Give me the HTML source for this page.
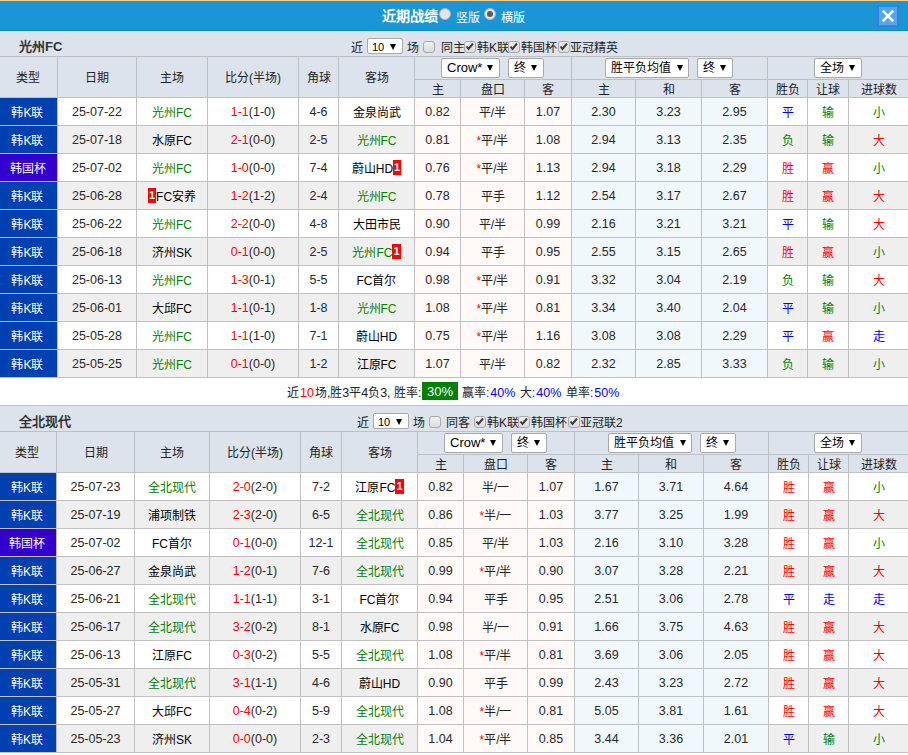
<!DOCTYPE html><html lang="zh-CN"><head><meta charset="utf-8"><style>
*{margin:0;padding:0;box-sizing:border-box}
html,body{width:908px;height:755px;overflow:hidden;background:#fff;font-family:"Liberation Sans",sans-serif;font-size:12px;color:#222}
.b{position:absolute}
.c{display:flex;align-items:center;justify-content:center;white-space:nowrap;line-height:14px;padding-top:2px}
.hd{color:#222}
.ty{color:#fff;padding-right:2px}
.num{color:#282828;font-size:12.5px;padding-top:1px}
.tm{color:#000}
.bd{background:#f00;color:#fff;font-weight:bold;font-size:11px;line-height:15px;padding:0 1px;position:relative;top:-1px}
.star{color:#f00}
.res{}
.sel{position:absolute;background:#fff;border:1px solid #a9a9a9;border-radius:2px}
.st{position:absolute;left:5px;top:2px;line-height:14px;color:#000}
.arr{position:absolute;top:6px;width:0;height:0;border-left:3.5px solid transparent;border-right:3.5px solid transparent;border-top:6px solid #000}
.cb{position:absolute;width:12px;height:12px;border:1px solid #a8a8a8;border-radius:3px;background:linear-gradient(#f0f0f0,#dcdcdc)}
.t{position:absolute;white-space:nowrap;line-height:14px;padding-top:1px}
</style></head><body>
<div class="b" style="left:0;top:0;width:908px;height:1px;background:#f5d08a"></div>
<div class="b" style="left:0;top:1px;width:908px;height:30px;background:#1a96d6;border-bottom:1px solid #0e8ad0"></div>
<div class="t" style="left:382px;top:7px;color:#fff;font-weight:bold;font-size:14px;line-height:16px">近期战绩</div>
<div class="b" style="left:439px;top:8px;width:12px;height:12px;border-radius:50%;background:#e6e6e6;border:1px solid #b0b0b0"></div>
<div class="t" style="left:456px;top:10px;color:#fff;font-size:12px">竖版</div>
<div class="b" style="left:484px;top:8px;width:12px;height:12px;border-radius:50%;background:#e6e6e6;border:1px solid #b0b0b0"><div class="b" style="left:2px;top:2px;width:6px;height:6px;border-radius:50%;background:#5c5c5c"></div></div>
<div class="t" style="left:501px;top:10px;color:#fff;font-size:12px">横版</div>
<div class="b" style="left:877px;top:5px;width:22px;height:22px;background:#56a5e8;border:2px solid #2a85e0"><svg width="18" height="18" style="position:absolute;left:0;top:0"><path d="M4.6 4.6L13.4 13.4M13.4 4.6L4.6 13.4" stroke="#fff" stroke-width="2.6" stroke-linecap="square"/></svg></div>
<div class="b" style="left:0;top:31px;width:908px;height:25px;background:#dce3ec"></div>
<div class="t" style="left:19px;top:39px;font-weight:bold;font-size:13px;color:#333">光州FC</div>
<div class="t" style="left:351px;top:40px">近</div>
<div class="sel" style="left:367px;top:38px;width:36px;height:16px;"><span class="st" style="top:2px"><span style="font-size:11px;position:relative;left:-1px;top:-1px">10</span></span><span class="arr" style="left:22px;top:5px"></span></div>
<div class="t" style="left:407px;top:40px">场</div>
<div class="cb" style="left:423px;top:41px"></div>
<div class="t" style="left:441px;top:40px">同主</div>
<div class="cb" style="left:464px;top:41px"><svg width="11" height="11" style="position:absolute;left:-1px;top:-1px"><path d="M2.5 5.5L4.5 8L9 2.5" stroke="#3c3c3c" stroke-width="2" fill="none"/></svg></div>
<div class="t" style="left:477px;top:40px">韩K联</div>
<div class="cb" style="left:508px;top:41px"><svg width="11" height="11" style="position:absolute;left:-1px;top:-1px"><path d="M2.5 5.5L4.5 8L9 2.5" stroke="#3c3c3c" stroke-width="2" fill="none"/></svg></div>
<div class="t" style="left:521px;top:40px">韩国杯</div>
<div class="cb" style="left:558px;top:41px"><svg width="11" height="11" style="position:absolute;left:-1px;top:-1px"><path d="M2.5 5.5L4.5 8L9 2.5" stroke="#3c3c3c" stroke-width="2" fill="none"/></svg></div>
<div class="t" style="left:570px;top:40px">亚冠精英</div>
<div class="b" style="left:0px;top:56px;width:908px;height:322px;background:#c0c0c0;"></div>
<div class="b c hd" style="left:0px;top:57px;width:57px;height:40px;background:#dce3ec;padding-right:2px">类型</div>
<div class="b c hd" style="left:58px;top:57px;width:78px;height:40px;background:#dce3ec;">日期</div>
<div class="b c hd" style="left:137px;top:57px;width:70px;height:40px;background:#dce3ec;">主场</div>
<div class="b c hd" style="left:208px;top:57px;width:90px;height:40px;background:#dce3ec;">比分(半场)</div>
<div class="b c hd" style="left:299px;top:57px;width:39px;height:40px;background:#dce3ec;">角球</div>
<div class="b c hd" style="left:339px;top:57px;width:75px;height:40px;background:#dce3ec;">客场</div>
<div class="b c" style="left:415px;top:57px;width:156px;height:22px;background:#dce3ec;"></div>
<div class="b c" style="left:572px;top:57px;width:195px;height:22px;background:#dce3ec;"></div>
<div class="b c" style="left:768px;top:57px;width:140px;height:22px;background:#dce3ec;"></div>
<div class="b c hd" style="left:415px;top:80px;width:45px;height:17px;background:#dce3ec;">主</div>
<div class="b c hd" style="left:461px;top:80px;width:63px;height:17px;background:#dce3ec;">盘口</div>
<div class="b c hd" style="left:525px;top:80px;width:46px;height:17px;background:#dce3ec;">客</div>
<div class="b c hd" style="left:572px;top:80px;width:63px;height:17px;background:#dce3ec;">主</div>
<div class="b c hd" style="left:636px;top:80px;width:65px;height:17px;background:#dce3ec;">和</div>
<div class="b c hd" style="left:702px;top:80px;width:65px;height:17px;background:#dce3ec;">客</div>
<div class="b c hd" style="left:768px;top:80px;width:39px;height:17px;background:#dce3ec;">胜负</div>
<div class="b c hd" style="left:808px;top:80px;width:40px;height:17px;background:#dce3ec;">让球</div>
<div class="b c hd" style="left:849px;top:80px;width:59px;height:17px;background:#dce3ec;">进球数</div>
<div class="b c ty" style="left:0px;top:98px;width:57px;height:27px;background:#0040b0;">韩K联</div>
<div class="b c num" style="left:58px;top:98px;width:78px;height:27px;background:#fff;">25-07-22</div>
<div class="b c tm" style="left:137px;top:98px;width:70px;height:27px;background:#fff;"><span style="color:#008000">光州FC</span></div>
<div class="b c num sc" style="left:208px;top:98px;width:90px;height:27px;background:#fff;"><span style="color:#f00">1-1</span>(1-0)</div>
<div class="b c num" style="left:299px;top:98px;width:39px;height:27px;background:#fff;">4-6</div>
<div class="b c tm" style="left:339px;top:98px;width:75px;height:27px;background:#fff;"><span style="color:#000">金泉尚武</span></div>
<div class="b c num" style="left:415px;top:98px;width:45px;height:27px;background:#fffaf7;">0.82</div>
<div class="b c hc" style="left:461px;top:98px;width:63px;height:27px;background:#fffaf7;">平/半</div>
<div class="b c num" style="left:525px;top:98px;width:46px;height:27px;background:#fffaf7;">1.07</div>
<div class="b c num" style="left:572px;top:98px;width:63px;height:27px;background:#f1f8fc;">2.30</div>
<div class="b c num" style="left:636px;top:98px;width:65px;height:27px;background:#f1f8fc;">3.23</div>
<div class="b c num" style="left:702px;top:98px;width:65px;height:27px;background:#f1f8fc;">2.95</div>
<div class="b c res" style="left:768px;top:98px;width:39px;height:27px;background:#fff;"><span style="color:#0000ff">平</span></div>
<div class="b c res" style="left:808px;top:98px;width:40px;height:27px;background:#fff;"><span style="color:#008000">输</span></div>
<div class="b c res" style="left:849px;top:98px;width:59px;height:27px;background:#fff;"><span style="color:#008000">小</span></div>
<div class="b c ty" style="left:0px;top:126px;width:57px;height:27px;background:#0040b0;">韩K联</div>
<div class="b c num" style="left:58px;top:126px;width:78px;height:27px;background:#efefef;">25-07-18</div>
<div class="b c tm" style="left:137px;top:126px;width:70px;height:27px;background:#efefef;"><span style="color:#000">水原FC</span></div>
<div class="b c num sc" style="left:208px;top:126px;width:90px;height:27px;background:#efefef;"><span style="color:#f00">2-1</span>(0-0)</div>
<div class="b c num" style="left:299px;top:126px;width:39px;height:27px;background:#efefef;">2-5</div>
<div class="b c tm" style="left:339px;top:126px;width:75px;height:27px;background:#efefef;"><span style="color:#008000">光州FC</span></div>
<div class="b c num" style="left:415px;top:126px;width:45px;height:27px;background:#fffaf7;">0.81</div>
<div class="b c hc" style="left:461px;top:126px;width:63px;height:27px;background:#fffaf7;"><span class="star">*</span>平/半</div>
<div class="b c num" style="left:525px;top:126px;width:46px;height:27px;background:#fffaf7;">1.08</div>
<div class="b c num" style="left:572px;top:126px;width:63px;height:27px;background:#f1f8fc;">2.94</div>
<div class="b c num" style="left:636px;top:126px;width:65px;height:27px;background:#f1f8fc;">3.13</div>
<div class="b c num" style="left:702px;top:126px;width:65px;height:27px;background:#f1f8fc;">2.35</div>
<div class="b c res" style="left:768px;top:126px;width:39px;height:27px;background:#efefef;"><span style="color:#008000">负</span></div>
<div class="b c res" style="left:808px;top:126px;width:40px;height:27px;background:#efefef;"><span style="color:#008000">输</span></div>
<div class="b c res" style="left:849px;top:126px;width:59px;height:27px;background:#efefef;"><span style="color:#ff0000">大</span></div>
<div class="b c ty" style="left:0px;top:154px;width:57px;height:27px;background:#3300cc;">韩国杯</div>
<div class="b c num" style="left:58px;top:154px;width:78px;height:27px;background:#fff;">25-07-02</div>
<div class="b c tm" style="left:137px;top:154px;width:70px;height:27px;background:#fff;"><span style="color:#008000">光州FC</span></div>
<div class="b c num sc" style="left:208px;top:154px;width:90px;height:27px;background:#fff;"><span style="color:#f00">1-0</span>(0-0)</div>
<div class="b c num" style="left:299px;top:154px;width:39px;height:27px;background:#fff;">7-4</div>
<div class="b c tm" style="left:339px;top:154px;width:75px;height:27px;background:#fff;"><span style="color:#000">蔚山HD</span><span class="bd">1</span></div>
<div class="b c num" style="left:415px;top:154px;width:45px;height:27px;background:#fffaf7;">0.76</div>
<div class="b c hc" style="left:461px;top:154px;width:63px;height:27px;background:#fffaf7;"><span class="star">*</span>平/半</div>
<div class="b c num" style="left:525px;top:154px;width:46px;height:27px;background:#fffaf7;">1.13</div>
<div class="b c num" style="left:572px;top:154px;width:63px;height:27px;background:#f1f8fc;">2.94</div>
<div class="b c num" style="left:636px;top:154px;width:65px;height:27px;background:#f1f8fc;">3.18</div>
<div class="b c num" style="left:702px;top:154px;width:65px;height:27px;background:#f1f8fc;">2.29</div>
<div class="b c res" style="left:768px;top:154px;width:39px;height:27px;background:#fff;"><span style="color:#ff0000">胜</span></div>
<div class="b c res" style="left:808px;top:154px;width:40px;height:27px;background:#fff;"><span style="color:#ff0000">赢</span></div>
<div class="b c res" style="left:849px;top:154px;width:59px;height:27px;background:#fff;"><span style="color:#008000">小</span></div>
<div class="b c ty" style="left:0px;top:182px;width:57px;height:27px;background:#0040b0;">韩K联</div>
<div class="b c num" style="left:58px;top:182px;width:78px;height:27px;background:#efefef;">25-06-28</div>
<div class="b c tm" style="left:137px;top:182px;width:70px;height:27px;background:#efefef;"><span class="bd">1</span><span style="color:#000">FC安养</span></div>
<div class="b c num sc" style="left:208px;top:182px;width:90px;height:27px;background:#efefef;"><span style="color:#f00">1-2</span>(1-2)</div>
<div class="b c num" style="left:299px;top:182px;width:39px;height:27px;background:#efefef;">2-4</div>
<div class="b c tm" style="left:339px;top:182px;width:75px;height:27px;background:#efefef;"><span style="color:#008000">光州FC</span></div>
<div class="b c num" style="left:415px;top:182px;width:45px;height:27px;background:#fffaf7;">0.78</div>
<div class="b c hc" style="left:461px;top:182px;width:63px;height:27px;background:#fffaf7;">平手</div>
<div class="b c num" style="left:525px;top:182px;width:46px;height:27px;background:#fffaf7;">1.12</div>
<div class="b c num" style="left:572px;top:182px;width:63px;height:27px;background:#f1f8fc;">2.54</div>
<div class="b c num" style="left:636px;top:182px;width:65px;height:27px;background:#f1f8fc;">3.17</div>
<div class="b c num" style="left:702px;top:182px;width:65px;height:27px;background:#f1f8fc;">2.67</div>
<div class="b c res" style="left:768px;top:182px;width:39px;height:27px;background:#efefef;"><span style="color:#ff0000">胜</span></div>
<div class="b c res" style="left:808px;top:182px;width:40px;height:27px;background:#efefef;"><span style="color:#ff0000">赢</span></div>
<div class="b c res" style="left:849px;top:182px;width:59px;height:27px;background:#efefef;"><span style="color:#ff0000">大</span></div>
<div class="b c ty" style="left:0px;top:210px;width:57px;height:27px;background:#0040b0;">韩K联</div>
<div class="b c num" style="left:58px;top:210px;width:78px;height:27px;background:#fff;">25-06-22</div>
<div class="b c tm" style="left:137px;top:210px;width:70px;height:27px;background:#fff;"><span style="color:#008000">光州FC</span></div>
<div class="b c num sc" style="left:208px;top:210px;width:90px;height:27px;background:#fff;"><span style="color:#f00">2-2</span>(0-0)</div>
<div class="b c num" style="left:299px;top:210px;width:39px;height:27px;background:#fff;">4-8</div>
<div class="b c tm" style="left:339px;top:210px;width:75px;height:27px;background:#fff;"><span style="color:#000">大田市民</span></div>
<div class="b c num" style="left:415px;top:210px;width:45px;height:27px;background:#fffaf7;">0.90</div>
<div class="b c hc" style="left:461px;top:210px;width:63px;height:27px;background:#fffaf7;">平/半</div>
<div class="b c num" style="left:525px;top:210px;width:46px;height:27px;background:#fffaf7;">0.99</div>
<div class="b c num" style="left:572px;top:210px;width:63px;height:27px;background:#f1f8fc;">2.16</div>
<div class="b c num" style="left:636px;top:210px;width:65px;height:27px;background:#f1f8fc;">3.21</div>
<div class="b c num" style="left:702px;top:210px;width:65px;height:27px;background:#f1f8fc;">3.21</div>
<div class="b c res" style="left:768px;top:210px;width:39px;height:27px;background:#fff;"><span style="color:#0000ff">平</span></div>
<div class="b c res" style="left:808px;top:210px;width:40px;height:27px;background:#fff;"><span style="color:#008000">输</span></div>
<div class="b c res" style="left:849px;top:210px;width:59px;height:27px;background:#fff;"><span style="color:#ff0000">大</span></div>
<div class="b c ty" style="left:0px;top:238px;width:57px;height:27px;background:#0040b0;">韩K联</div>
<div class="b c num" style="left:58px;top:238px;width:78px;height:27px;background:#efefef;">25-06-18</div>
<div class="b c tm" style="left:137px;top:238px;width:70px;height:27px;background:#efefef;"><span style="color:#000">济州SK</span></div>
<div class="b c num sc" style="left:208px;top:238px;width:90px;height:27px;background:#efefef;"><span style="color:#f00">0-1</span>(0-0)</div>
<div class="b c num" style="left:299px;top:238px;width:39px;height:27px;background:#efefef;">2-5</div>
<div class="b c tm" style="left:339px;top:238px;width:75px;height:27px;background:#efefef;"><span style="color:#008000">光州FC</span><span class="bd">1</span></div>
<div class="b c num" style="left:415px;top:238px;width:45px;height:27px;background:#fffaf7;">0.94</div>
<div class="b c hc" style="left:461px;top:238px;width:63px;height:27px;background:#fffaf7;">平手</div>
<div class="b c num" style="left:525px;top:238px;width:46px;height:27px;background:#fffaf7;">0.95</div>
<div class="b c num" style="left:572px;top:238px;width:63px;height:27px;background:#f1f8fc;">2.55</div>
<div class="b c num" style="left:636px;top:238px;width:65px;height:27px;background:#f1f8fc;">3.15</div>
<div class="b c num" style="left:702px;top:238px;width:65px;height:27px;background:#f1f8fc;">2.65</div>
<div class="b c res" style="left:768px;top:238px;width:39px;height:27px;background:#efefef;"><span style="color:#ff0000">胜</span></div>
<div class="b c res" style="left:808px;top:238px;width:40px;height:27px;background:#efefef;"><span style="color:#ff0000">赢</span></div>
<div class="b c res" style="left:849px;top:238px;width:59px;height:27px;background:#efefef;"><span style="color:#008000">小</span></div>
<div class="b c ty" style="left:0px;top:266px;width:57px;height:27px;background:#0040b0;">韩K联</div>
<div class="b c num" style="left:58px;top:266px;width:78px;height:27px;background:#fff;">25-06-13</div>
<div class="b c tm" style="left:137px;top:266px;width:70px;height:27px;background:#fff;"><span style="color:#008000">光州FC</span></div>
<div class="b c num sc" style="left:208px;top:266px;width:90px;height:27px;background:#fff;"><span style="color:#f00">1-3</span>(0-1)</div>
<div class="b c num" style="left:299px;top:266px;width:39px;height:27px;background:#fff;">5-5</div>
<div class="b c tm" style="left:339px;top:266px;width:75px;height:27px;background:#fff;"><span style="color:#000">FC首尔</span></div>
<div class="b c num" style="left:415px;top:266px;width:45px;height:27px;background:#fffaf7;">0.98</div>
<div class="b c hc" style="left:461px;top:266px;width:63px;height:27px;background:#fffaf7;"><span class="star">*</span>平/半</div>
<div class="b c num" style="left:525px;top:266px;width:46px;height:27px;background:#fffaf7;">0.91</div>
<div class="b c num" style="left:572px;top:266px;width:63px;height:27px;background:#f1f8fc;">3.32</div>
<div class="b c num" style="left:636px;top:266px;width:65px;height:27px;background:#f1f8fc;">3.04</div>
<div class="b c num" style="left:702px;top:266px;width:65px;height:27px;background:#f1f8fc;">2.19</div>
<div class="b c res" style="left:768px;top:266px;width:39px;height:27px;background:#fff;"><span style="color:#008000">负</span></div>
<div class="b c res" style="left:808px;top:266px;width:40px;height:27px;background:#fff;"><span style="color:#008000">输</span></div>
<div class="b c res" style="left:849px;top:266px;width:59px;height:27px;background:#fff;"><span style="color:#ff0000">大</span></div>
<div class="b c ty" style="left:0px;top:294px;width:57px;height:27px;background:#0040b0;">韩K联</div>
<div class="b c num" style="left:58px;top:294px;width:78px;height:27px;background:#efefef;">25-06-01</div>
<div class="b c tm" style="left:137px;top:294px;width:70px;height:27px;background:#efefef;"><span style="color:#000">大邱FC</span></div>
<div class="b c num sc" style="left:208px;top:294px;width:90px;height:27px;background:#efefef;"><span style="color:#f00">1-1</span>(0-1)</div>
<div class="b c num" style="left:299px;top:294px;width:39px;height:27px;background:#efefef;">1-8</div>
<div class="b c tm" style="left:339px;top:294px;width:75px;height:27px;background:#efefef;"><span style="color:#008000">光州FC</span></div>
<div class="b c num" style="left:415px;top:294px;width:45px;height:27px;background:#fffaf7;">1.08</div>
<div class="b c hc" style="left:461px;top:294px;width:63px;height:27px;background:#fffaf7;"><span class="star">*</span>平/半</div>
<div class="b c num" style="left:525px;top:294px;width:46px;height:27px;background:#fffaf7;">0.81</div>
<div class="b c num" style="left:572px;top:294px;width:63px;height:27px;background:#f1f8fc;">3.34</div>
<div class="b c num" style="left:636px;top:294px;width:65px;height:27px;background:#f1f8fc;">3.40</div>
<div class="b c num" style="left:702px;top:294px;width:65px;height:27px;background:#f1f8fc;">2.04</div>
<div class="b c res" style="left:768px;top:294px;width:39px;height:27px;background:#efefef;"><span style="color:#0000ff">平</span></div>
<div class="b c res" style="left:808px;top:294px;width:40px;height:27px;background:#efefef;"><span style="color:#008000">输</span></div>
<div class="b c res" style="left:849px;top:294px;width:59px;height:27px;background:#efefef;"><span style="color:#008000">小</span></div>
<div class="b c ty" style="left:0px;top:322px;width:57px;height:27px;background:#0040b0;">韩K联</div>
<div class="b c num" style="left:58px;top:322px;width:78px;height:27px;background:#fff;">25-05-28</div>
<div class="b c tm" style="left:137px;top:322px;width:70px;height:27px;background:#fff;"><span style="color:#008000">光州FC</span></div>
<div class="b c num sc" style="left:208px;top:322px;width:90px;height:27px;background:#fff;"><span style="color:#f00">1-1</span>(1-0)</div>
<div class="b c num" style="left:299px;top:322px;width:39px;height:27px;background:#fff;">7-1</div>
<div class="b c tm" style="left:339px;top:322px;width:75px;height:27px;background:#fff;"><span style="color:#000">蔚山HD</span></div>
<div class="b c num" style="left:415px;top:322px;width:45px;height:27px;background:#fffaf7;">0.75</div>
<div class="b c hc" style="left:461px;top:322px;width:63px;height:27px;background:#fffaf7;"><span class="star">*</span>平/半</div>
<div class="b c num" style="left:525px;top:322px;width:46px;height:27px;background:#fffaf7;">1.16</div>
<div class="b c num" style="left:572px;top:322px;width:63px;height:27px;background:#f1f8fc;">3.08</div>
<div class="b c num" style="left:636px;top:322px;width:65px;height:27px;background:#f1f8fc;">3.08</div>
<div class="b c num" style="left:702px;top:322px;width:65px;height:27px;background:#f1f8fc;">2.29</div>
<div class="b c res" style="left:768px;top:322px;width:39px;height:27px;background:#fff;"><span style="color:#0000ff">平</span></div>
<div class="b c res" style="left:808px;top:322px;width:40px;height:27px;background:#fff;"><span style="color:#ff0000">赢</span></div>
<div class="b c res" style="left:849px;top:322px;width:59px;height:27px;background:#fff;"><span style="color:#0000ff">走</span></div>
<div class="b c ty" style="left:0px;top:350px;width:57px;height:27px;background:#0040b0;">韩K联</div>
<div class="b c num" style="left:58px;top:350px;width:78px;height:27px;background:#efefef;">25-05-25</div>
<div class="b c tm" style="left:137px;top:350px;width:70px;height:27px;background:#efefef;"><span style="color:#008000">光州FC</span></div>
<div class="b c num sc" style="left:208px;top:350px;width:90px;height:27px;background:#efefef;"><span style="color:#f00">0-1</span>(0-0)</div>
<div class="b c num" style="left:299px;top:350px;width:39px;height:27px;background:#efefef;">1-2</div>
<div class="b c tm" style="left:339px;top:350px;width:75px;height:27px;background:#efefef;"><span style="color:#000">江原FC</span></div>
<div class="b c num" style="left:415px;top:350px;width:45px;height:27px;background:#fffaf7;">1.07</div>
<div class="b c hc" style="left:461px;top:350px;width:63px;height:27px;background:#fffaf7;">平/半</div>
<div class="b c num" style="left:525px;top:350px;width:46px;height:27px;background:#fffaf7;">0.82</div>
<div class="b c num" style="left:572px;top:350px;width:63px;height:27px;background:#f1f8fc;">2.32</div>
<div class="b c num" style="left:636px;top:350px;width:65px;height:27px;background:#f1f8fc;">2.85</div>
<div class="b c num" style="left:702px;top:350px;width:65px;height:27px;background:#f1f8fc;">3.33</div>
<div class="b c res" style="left:768px;top:350px;width:39px;height:27px;background:#efefef;"><span style="color:#008000">负</span></div>
<div class="b c res" style="left:808px;top:350px;width:40px;height:27px;background:#efefef;"><span style="color:#008000">输</span></div>
<div class="b c res" style="left:849px;top:350px;width:59px;height:27px;background:#efefef;"><span style="color:#008000">小</span></div>
<div class="sel" style="left:441px;top:58px;width:59px;height:20px;"><span class="st" style="top:2px"><span style="font-size:13px">Crow*</span></span><span class="arr" style="left:45px;top:6px"></span></div>
<div class="sel" style="left:508px;top:58px;width:36px;height:20px;"><span class="st" style="top:2px">终</span><span class="arr" style="left:22px;top:6px"></span></div>
<div class="sel" style="left:605px;top:58px;width:84px;height:20px;"><span class="st" style="top:2px">胜平负均值</span><span class="arr" style="left:71px;top:6px"></span></div>
<div class="sel" style="left:697px;top:58px;width:36px;height:20px;"><span class="st" style="top:2px">终</span><span class="arr" style="left:22px;top:6px"></span></div>
<div class="sel" style="left:814px;top:58px;width:48px;height:20px;"><span class="st" style="top:2px">全场</span><span class="arr" style="left:34px;top:6px"></span></div>
<div class="t" style="left:287px;top:385px;font-size:12px">近<span style="color:#f00;font-size:12.5px;margin:0 1px">10</span>场,胜<span style="font-size:12.5px">3</span>平<span style="font-size:12.5px">4</span>负<span style="font-size:12.5px">3</span>,</div>
<div class="t" style="left:394px;top:385px">胜率:</div>
<div class="b" style="left:422px;top:382px;width:36px;height:18px;background:#008000;color:#fff;font-size:13px;line-height:20px;text-align:center">30%</div>
<div class="t" style="left:462px;top:385px">赢率:<span style="color:#00f;font-size:12.5px;margin-left:1px">40%</span></div>
<div class="t" style="left:520px;top:385px">大:<span style="color:#00f;font-size:12.5px;margin-left:1px">40%</span></div>
<div class="t" style="left:566px;top:385px">单率:<span style="color:#00f;font-size:12.5px;margin-left:1px">50%</span></div>
<div class="b" style="left:0;top:405px;width:908px;height:1px;background:#c0c0c0"></div>
<div class="b" style="left:0;top:406px;width:908px;height:25px;background:#dce3ec"></div>
<div class="t" style="left:19px;top:414px;font-weight:bold;font-size:13px;color:#333">全北现代</div>
<div class="t" style="left:357px;top:415px">近</div>
<div class="sel" style="left:373px;top:413px;width:36px;height:16px;"><span class="st" style="top:2px"><span style="font-size:11px;position:relative;left:-1px;top:-1px">10</span></span><span class="arr" style="left:22px;top:5px"></span></div>
<div class="t" style="left:413px;top:415px">场</div>
<div class="cb" style="left:429px;top:416px"></div>
<div class="t" style="left:446px;top:415px">同客</div>
<div class="cb" style="left:474px;top:416px"><svg width="11" height="11" style="position:absolute;left:-1px;top:-1px"><path d="M2.5 5.5L4.5 8L9 2.5" stroke="#3c3c3c" stroke-width="2" fill="none"/></svg></div>
<div class="t" style="left:487px;top:415px">韩K联</div>
<div class="cb" style="left:518px;top:416px"><svg width="11" height="11" style="position:absolute;left:-1px;top:-1px"><path d="M2.5 5.5L4.5 8L9 2.5" stroke="#3c3c3c" stroke-width="2" fill="none"/></svg></div>
<div class="t" style="left:531px;top:415px">韩国杯</div>
<div class="cb" style="left:568px;top:416px"><svg width="11" height="11" style="position:absolute;left:-1px;top:-1px"><path d="M2.5 5.5L4.5 8L9 2.5" stroke="#3c3c3c" stroke-width="2" fill="none"/></svg></div>
<div class="t" style="left:580px;top:415px">亚冠联2</div>
<div class="b" style="left:0px;top:431px;width:908px;height:322px;background:#c0c0c0;"></div>
<div class="b c hd" style="left:0px;top:432px;width:56px;height:40px;background:#dce3ec;padding-right:2px">类型</div>
<div class="b c hd" style="left:57px;top:432px;width:77px;height:40px;background:#dce3ec;">日期</div>
<div class="b c hd" style="left:135px;top:432px;width:74px;height:40px;background:#dce3ec;">主场</div>
<div class="b c hd" style="left:210px;top:432px;width:90px;height:40px;background:#dce3ec;">比分(半场)</div>
<div class="b c hd" style="left:301px;top:432px;width:40px;height:40px;background:#dce3ec;">角球</div>
<div class="b c hd" style="left:342px;top:432px;width:75px;height:40px;background:#dce3ec;">客场</div>
<div class="b c" style="left:418px;top:432px;width:156px;height:22px;background:#dce3ec;"></div>
<div class="b c" style="left:575px;top:432px;width:193px;height:22px;background:#dce3ec;"></div>
<div class="b c" style="left:769px;top:432px;width:139px;height:22px;background:#dce3ec;"></div>
<div class="b c hd" style="left:418px;top:455px;width:45px;height:17px;background:#dce3ec;">主</div>
<div class="b c hd" style="left:464px;top:455px;width:63px;height:17px;background:#dce3ec;">盘口</div>
<div class="b c hd" style="left:528px;top:455px;width:46px;height:17px;background:#dce3ec;">客</div>
<div class="b c hd" style="left:575px;top:455px;width:63px;height:17px;background:#dce3ec;">主</div>
<div class="b c hd" style="left:639px;top:455px;width:64px;height:17px;background:#dce3ec;">和</div>
<div class="b c hd" style="left:704px;top:455px;width:64px;height:17px;background:#dce3ec;">客</div>
<div class="b c hd" style="left:769px;top:455px;width:39px;height:17px;background:#dce3ec;">胜负</div>
<div class="b c hd" style="left:809px;top:455px;width:39px;height:17px;background:#dce3ec;">让球</div>
<div class="b c hd" style="left:849px;top:455px;width:59px;height:17px;background:#dce3ec;">进球数</div>
<div class="b c ty" style="left:0px;top:473px;width:56px;height:27px;background:#0040b0;">韩K联</div>
<div class="b c num" style="left:57px;top:473px;width:77px;height:27px;background:#fff;">25-07-23</div>
<div class="b c tm" style="left:135px;top:473px;width:74px;height:27px;background:#fff;"><span style="color:#008000">全北现代</span></div>
<div class="b c num sc" style="left:210px;top:473px;width:90px;height:27px;background:#fff;"><span style="color:#f00">2-0</span>(2-0)</div>
<div class="b c num" style="left:301px;top:473px;width:40px;height:27px;background:#fff;">7-2</div>
<div class="b c tm" style="left:342px;top:473px;width:75px;height:27px;background:#fff;"><span style="color:#000">江原FC</span><span class="bd">1</span></div>
<div class="b c num" style="left:418px;top:473px;width:45px;height:27px;background:#fffaf7;">0.82</div>
<div class="b c hc" style="left:464px;top:473px;width:63px;height:27px;background:#fffaf7;">半/一</div>
<div class="b c num" style="left:528px;top:473px;width:46px;height:27px;background:#fffaf7;">1.07</div>
<div class="b c num" style="left:575px;top:473px;width:63px;height:27px;background:#f1f8fc;">1.67</div>
<div class="b c num" style="left:639px;top:473px;width:64px;height:27px;background:#f1f8fc;">3.71</div>
<div class="b c num" style="left:704px;top:473px;width:64px;height:27px;background:#f1f8fc;">4.64</div>
<div class="b c res" style="left:769px;top:473px;width:39px;height:27px;background:#fff;"><span style="color:#ff0000">胜</span></div>
<div class="b c res" style="left:809px;top:473px;width:39px;height:27px;background:#fff;"><span style="color:#ff0000">赢</span></div>
<div class="b c res" style="left:849px;top:473px;width:59px;height:27px;background:#fff;"><span style="color:#008000">小</span></div>
<div class="b c ty" style="left:0px;top:501px;width:56px;height:27px;background:#0040b0;">韩K联</div>
<div class="b c num" style="left:57px;top:501px;width:77px;height:27px;background:#efefef;">25-07-19</div>
<div class="b c tm" style="left:135px;top:501px;width:74px;height:27px;background:#efefef;"><span style="color:#000">浦项制铁</span></div>
<div class="b c num sc" style="left:210px;top:501px;width:90px;height:27px;background:#efefef;"><span style="color:#f00">2-3</span>(2-0)</div>
<div class="b c num" style="left:301px;top:501px;width:40px;height:27px;background:#efefef;">6-5</div>
<div class="b c tm" style="left:342px;top:501px;width:75px;height:27px;background:#efefef;"><span style="color:#008000">全北现代</span></div>
<div class="b c num" style="left:418px;top:501px;width:45px;height:27px;background:#fffaf7;">0.86</div>
<div class="b c hc" style="left:464px;top:501px;width:63px;height:27px;background:#fffaf7;"><span class="star">*</span>半/一</div>
<div class="b c num" style="left:528px;top:501px;width:46px;height:27px;background:#fffaf7;">1.03</div>
<div class="b c num" style="left:575px;top:501px;width:63px;height:27px;background:#f1f8fc;">3.77</div>
<div class="b c num" style="left:639px;top:501px;width:64px;height:27px;background:#f1f8fc;">3.25</div>
<div class="b c num" style="left:704px;top:501px;width:64px;height:27px;background:#f1f8fc;">1.99</div>
<div class="b c res" style="left:769px;top:501px;width:39px;height:27px;background:#efefef;"><span style="color:#ff0000">胜</span></div>
<div class="b c res" style="left:809px;top:501px;width:39px;height:27px;background:#efefef;"><span style="color:#ff0000">赢</span></div>
<div class="b c res" style="left:849px;top:501px;width:59px;height:27px;background:#efefef;"><span style="color:#ff0000">大</span></div>
<div class="b c ty" style="left:0px;top:529px;width:56px;height:27px;background:#3300cc;">韩国杯</div>
<div class="b c num" style="left:57px;top:529px;width:77px;height:27px;background:#fff;">25-07-02</div>
<div class="b c tm" style="left:135px;top:529px;width:74px;height:27px;background:#fff;"><span style="color:#000">FC首尔</span></div>
<div class="b c num sc" style="left:210px;top:529px;width:90px;height:27px;background:#fff;"><span style="color:#f00">0-1</span>(0-0)</div>
<div class="b c num" style="left:301px;top:529px;width:40px;height:27px;background:#fff;">12-1</div>
<div class="b c tm" style="left:342px;top:529px;width:75px;height:27px;background:#fff;"><span style="color:#008000">全北现代</span></div>
<div class="b c num" style="left:418px;top:529px;width:45px;height:27px;background:#fffaf7;">0.85</div>
<div class="b c hc" style="left:464px;top:529px;width:63px;height:27px;background:#fffaf7;">平/半</div>
<div class="b c num" style="left:528px;top:529px;width:46px;height:27px;background:#fffaf7;">1.03</div>
<div class="b c num" style="left:575px;top:529px;width:63px;height:27px;background:#f1f8fc;">2.16</div>
<div class="b c num" style="left:639px;top:529px;width:64px;height:27px;background:#f1f8fc;">3.10</div>
<div class="b c num" style="left:704px;top:529px;width:64px;height:27px;background:#f1f8fc;">3.28</div>
<div class="b c res" style="left:769px;top:529px;width:39px;height:27px;background:#fff;"><span style="color:#ff0000">胜</span></div>
<div class="b c res" style="left:809px;top:529px;width:39px;height:27px;background:#fff;"><span style="color:#ff0000">赢</span></div>
<div class="b c res" style="left:849px;top:529px;width:59px;height:27px;background:#fff;"><span style="color:#008000">小</span></div>
<div class="b c ty" style="left:0px;top:557px;width:56px;height:27px;background:#0040b0;">韩K联</div>
<div class="b c num" style="left:57px;top:557px;width:77px;height:27px;background:#efefef;">25-06-27</div>
<div class="b c tm" style="left:135px;top:557px;width:74px;height:27px;background:#efefef;"><span style="color:#000">金泉尚武</span></div>
<div class="b c num sc" style="left:210px;top:557px;width:90px;height:27px;background:#efefef;"><span style="color:#f00">1-2</span>(0-1)</div>
<div class="b c num" style="left:301px;top:557px;width:40px;height:27px;background:#efefef;">7-6</div>
<div class="b c tm" style="left:342px;top:557px;width:75px;height:27px;background:#efefef;"><span style="color:#008000">全北现代</span></div>
<div class="b c num" style="left:418px;top:557px;width:45px;height:27px;background:#fffaf7;">0.99</div>
<div class="b c hc" style="left:464px;top:557px;width:63px;height:27px;background:#fffaf7;"><span class="star">*</span>平/半</div>
<div class="b c num" style="left:528px;top:557px;width:46px;height:27px;background:#fffaf7;">0.90</div>
<div class="b c num" style="left:575px;top:557px;width:63px;height:27px;background:#f1f8fc;">3.07</div>
<div class="b c num" style="left:639px;top:557px;width:64px;height:27px;background:#f1f8fc;">3.28</div>
<div class="b c num" style="left:704px;top:557px;width:64px;height:27px;background:#f1f8fc;">2.21</div>
<div class="b c res" style="left:769px;top:557px;width:39px;height:27px;background:#efefef;"><span style="color:#ff0000">胜</span></div>
<div class="b c res" style="left:809px;top:557px;width:39px;height:27px;background:#efefef;"><span style="color:#ff0000">赢</span></div>
<div class="b c res" style="left:849px;top:557px;width:59px;height:27px;background:#efefef;"><span style="color:#ff0000">大</span></div>
<div class="b c ty" style="left:0px;top:585px;width:56px;height:27px;background:#0040b0;">韩K联</div>
<div class="b c num" style="left:57px;top:585px;width:77px;height:27px;background:#fff;">25-06-21</div>
<div class="b c tm" style="left:135px;top:585px;width:74px;height:27px;background:#fff;"><span style="color:#008000">全北现代</span></div>
<div class="b c num sc" style="left:210px;top:585px;width:90px;height:27px;background:#fff;"><span style="color:#f00">1-1</span>(1-1)</div>
<div class="b c num" style="left:301px;top:585px;width:40px;height:27px;background:#fff;">3-1</div>
<div class="b c tm" style="left:342px;top:585px;width:75px;height:27px;background:#fff;"><span style="color:#000">FC首尔</span></div>
<div class="b c num" style="left:418px;top:585px;width:45px;height:27px;background:#fffaf7;">0.94</div>
<div class="b c hc" style="left:464px;top:585px;width:63px;height:27px;background:#fffaf7;">平手</div>
<div class="b c num" style="left:528px;top:585px;width:46px;height:27px;background:#fffaf7;">0.95</div>
<div class="b c num" style="left:575px;top:585px;width:63px;height:27px;background:#f1f8fc;">2.51</div>
<div class="b c num" style="left:639px;top:585px;width:64px;height:27px;background:#f1f8fc;">3.06</div>
<div class="b c num" style="left:704px;top:585px;width:64px;height:27px;background:#f1f8fc;">2.78</div>
<div class="b c res" style="left:769px;top:585px;width:39px;height:27px;background:#fff;"><span style="color:#0000ff">平</span></div>
<div class="b c res" style="left:809px;top:585px;width:39px;height:27px;background:#fff;"><span style="color:#0000ff">走</span></div>
<div class="b c res" style="left:849px;top:585px;width:59px;height:27px;background:#fff;"><span style="color:#0000ff">走</span></div>
<div class="b c ty" style="left:0px;top:613px;width:56px;height:27px;background:#0040b0;">韩K联</div>
<div class="b c num" style="left:57px;top:613px;width:77px;height:27px;background:#efefef;">25-06-17</div>
<div class="b c tm" style="left:135px;top:613px;width:74px;height:27px;background:#efefef;"><span style="color:#008000">全北现代</span></div>
<div class="b c num sc" style="left:210px;top:613px;width:90px;height:27px;background:#efefef;"><span style="color:#f00">3-2</span>(0-2)</div>
<div class="b c num" style="left:301px;top:613px;width:40px;height:27px;background:#efefef;">8-1</div>
<div class="b c tm" style="left:342px;top:613px;width:75px;height:27px;background:#efefef;"><span style="color:#000">水原FC</span></div>
<div class="b c num" style="left:418px;top:613px;width:45px;height:27px;background:#fffaf7;">0.98</div>
<div class="b c hc" style="left:464px;top:613px;width:63px;height:27px;background:#fffaf7;">半/一</div>
<div class="b c num" style="left:528px;top:613px;width:46px;height:27px;background:#fffaf7;">0.91</div>
<div class="b c num" style="left:575px;top:613px;width:63px;height:27px;background:#f1f8fc;">1.66</div>
<div class="b c num" style="left:639px;top:613px;width:64px;height:27px;background:#f1f8fc;">3.75</div>
<div class="b c num" style="left:704px;top:613px;width:64px;height:27px;background:#f1f8fc;">4.63</div>
<div class="b c res" style="left:769px;top:613px;width:39px;height:27px;background:#efefef;"><span style="color:#ff0000">胜</span></div>
<div class="b c res" style="left:809px;top:613px;width:39px;height:27px;background:#efefef;"><span style="color:#ff0000">赢</span></div>
<div class="b c res" style="left:849px;top:613px;width:59px;height:27px;background:#efefef;"><span style="color:#ff0000">大</span></div>
<div class="b c ty" style="left:0px;top:641px;width:56px;height:27px;background:#0040b0;">韩K联</div>
<div class="b c num" style="left:57px;top:641px;width:77px;height:27px;background:#fff;">25-06-13</div>
<div class="b c tm" style="left:135px;top:641px;width:74px;height:27px;background:#fff;"><span style="color:#000">江原FC</span></div>
<div class="b c num sc" style="left:210px;top:641px;width:90px;height:27px;background:#fff;"><span style="color:#f00">0-3</span>(0-2)</div>
<div class="b c num" style="left:301px;top:641px;width:40px;height:27px;background:#fff;">5-5</div>
<div class="b c tm" style="left:342px;top:641px;width:75px;height:27px;background:#fff;"><span style="color:#008000">全北现代</span></div>
<div class="b c num" style="left:418px;top:641px;width:45px;height:27px;background:#fffaf7;">1.08</div>
<div class="b c hc" style="left:464px;top:641px;width:63px;height:27px;background:#fffaf7;"><span class="star">*</span>平/半</div>
<div class="b c num" style="left:528px;top:641px;width:46px;height:27px;background:#fffaf7;">0.81</div>
<div class="b c num" style="left:575px;top:641px;width:63px;height:27px;background:#f1f8fc;">3.69</div>
<div class="b c num" style="left:639px;top:641px;width:64px;height:27px;background:#f1f8fc;">3.06</div>
<div class="b c num" style="left:704px;top:641px;width:64px;height:27px;background:#f1f8fc;">2.05</div>
<div class="b c res" style="left:769px;top:641px;width:39px;height:27px;background:#fff;"><span style="color:#ff0000">胜</span></div>
<div class="b c res" style="left:809px;top:641px;width:39px;height:27px;background:#fff;"><span style="color:#ff0000">赢</span></div>
<div class="b c res" style="left:849px;top:641px;width:59px;height:27px;background:#fff;"><span style="color:#ff0000">大</span></div>
<div class="b c ty" style="left:0px;top:669px;width:56px;height:27px;background:#0040b0;">韩K联</div>
<div class="b c num" style="left:57px;top:669px;width:77px;height:27px;background:#efefef;">25-05-31</div>
<div class="b c tm" style="left:135px;top:669px;width:74px;height:27px;background:#efefef;"><span style="color:#008000">全北现代</span></div>
<div class="b c num sc" style="left:210px;top:669px;width:90px;height:27px;background:#efefef;"><span style="color:#f00">3-1</span>(1-1)</div>
<div class="b c num" style="left:301px;top:669px;width:40px;height:27px;background:#efefef;">4-6</div>
<div class="b c tm" style="left:342px;top:669px;width:75px;height:27px;background:#efefef;"><span style="color:#000">蔚山HD</span></div>
<div class="b c num" style="left:418px;top:669px;width:45px;height:27px;background:#fffaf7;">0.90</div>
<div class="b c hc" style="left:464px;top:669px;width:63px;height:27px;background:#fffaf7;">平手</div>
<div class="b c num" style="left:528px;top:669px;width:46px;height:27px;background:#fffaf7;">0.99</div>
<div class="b c num" style="left:575px;top:669px;width:63px;height:27px;background:#f1f8fc;">2.43</div>
<div class="b c num" style="left:639px;top:669px;width:64px;height:27px;background:#f1f8fc;">3.23</div>
<div class="b c num" style="left:704px;top:669px;width:64px;height:27px;background:#f1f8fc;">2.72</div>
<div class="b c res" style="left:769px;top:669px;width:39px;height:27px;background:#efefef;"><span style="color:#ff0000">胜</span></div>
<div class="b c res" style="left:809px;top:669px;width:39px;height:27px;background:#efefef;"><span style="color:#ff0000">赢</span></div>
<div class="b c res" style="left:849px;top:669px;width:59px;height:27px;background:#efefef;"><span style="color:#ff0000">大</span></div>
<div class="b c ty" style="left:0px;top:697px;width:56px;height:27px;background:#0040b0;">韩K联</div>
<div class="b c num" style="left:57px;top:697px;width:77px;height:27px;background:#fff;">25-05-27</div>
<div class="b c tm" style="left:135px;top:697px;width:74px;height:27px;background:#fff;"><span style="color:#000">大邱FC</span></div>
<div class="b c num sc" style="left:210px;top:697px;width:90px;height:27px;background:#fff;"><span style="color:#f00">0-4</span>(0-2)</div>
<div class="b c num" style="left:301px;top:697px;width:40px;height:27px;background:#fff;">5-9</div>
<div class="b c tm" style="left:342px;top:697px;width:75px;height:27px;background:#fff;"><span style="color:#008000">全北现代</span></div>
<div class="b c num" style="left:418px;top:697px;width:45px;height:27px;background:#fffaf7;">1.08</div>
<div class="b c hc" style="left:464px;top:697px;width:63px;height:27px;background:#fffaf7;"><span class="star">*</span>半/一</div>
<div class="b c num" style="left:528px;top:697px;width:46px;height:27px;background:#fffaf7;">0.81</div>
<div class="b c num" style="left:575px;top:697px;width:63px;height:27px;background:#f1f8fc;">5.05</div>
<div class="b c num" style="left:639px;top:697px;width:64px;height:27px;background:#f1f8fc;">3.81</div>
<div class="b c num" style="left:704px;top:697px;width:64px;height:27px;background:#f1f8fc;">1.61</div>
<div class="b c res" style="left:769px;top:697px;width:39px;height:27px;background:#fff;"><span style="color:#ff0000">胜</span></div>
<div class="b c res" style="left:809px;top:697px;width:39px;height:27px;background:#fff;"><span style="color:#ff0000">赢</span></div>
<div class="b c res" style="left:849px;top:697px;width:59px;height:27px;background:#fff;"><span style="color:#ff0000">大</span></div>
<div class="b c ty" style="left:0px;top:725px;width:56px;height:27px;background:#0040b0;">韩K联</div>
<div class="b c num" style="left:57px;top:725px;width:77px;height:27px;background:#efefef;">25-05-23</div>
<div class="b c tm" style="left:135px;top:725px;width:74px;height:27px;background:#efefef;"><span style="color:#000">济州SK</span></div>
<div class="b c num sc" style="left:210px;top:725px;width:90px;height:27px;background:#efefef;"><span style="color:#f00">0-0</span>(0-0)</div>
<div class="b c num" style="left:301px;top:725px;width:40px;height:27px;background:#efefef;">2-3</div>
<div class="b c tm" style="left:342px;top:725px;width:75px;height:27px;background:#efefef;"><span style="color:#008000">全北现代</span></div>
<div class="b c num" style="left:418px;top:725px;width:45px;height:27px;background:#fffaf7;">1.04</div>
<div class="b c hc" style="left:464px;top:725px;width:63px;height:27px;background:#fffaf7;"><span class="star">*</span>平/半</div>
<div class="b c num" style="left:528px;top:725px;width:46px;height:27px;background:#fffaf7;">0.85</div>
<div class="b c num" style="left:575px;top:725px;width:63px;height:27px;background:#f1f8fc;">3.44</div>
<div class="b c num" style="left:639px;top:725px;width:64px;height:27px;background:#f1f8fc;">3.36</div>
<div class="b c num" style="left:704px;top:725px;width:64px;height:27px;background:#f1f8fc;">2.01</div>
<div class="b c res" style="left:769px;top:725px;width:39px;height:27px;background:#efefef;"><span style="color:#0000ff">平</span></div>
<div class="b c res" style="left:809px;top:725px;width:39px;height:27px;background:#efefef;"><span style="color:#008000">输</span></div>
<div class="b c res" style="left:849px;top:725px;width:59px;height:27px;background:#efefef;"><span style="color:#008000">小</span></div>
<div class="sel" style="left:444px;top:433px;width:59px;height:20px;"><span class="st" style="top:2px"><span style="font-size:13px">Crow*</span></span><span class="arr" style="left:45px;top:6px"></span></div>
<div class="sel" style="left:511px;top:433px;width:36px;height:20px;"><span class="st" style="top:2px">终</span><span class="arr" style="left:22px;top:6px"></span></div>
<div class="sel" style="left:608px;top:433px;width:84px;height:20px;"><span class="st" style="top:2px">胜平负均值</span><span class="arr" style="left:71px;top:6px"></span></div>
<div class="sel" style="left:700px;top:433px;width:36px;height:20px;"><span class="st" style="top:2px">终</span><span class="arr" style="left:22px;top:6px"></span></div>
<div class="sel" style="left:814px;top:433px;width:48px;height:20px;"><span class="st" style="top:2px">全场</span><span class="arr" style="left:34px;top:6px"></span></div>
</body></html>
